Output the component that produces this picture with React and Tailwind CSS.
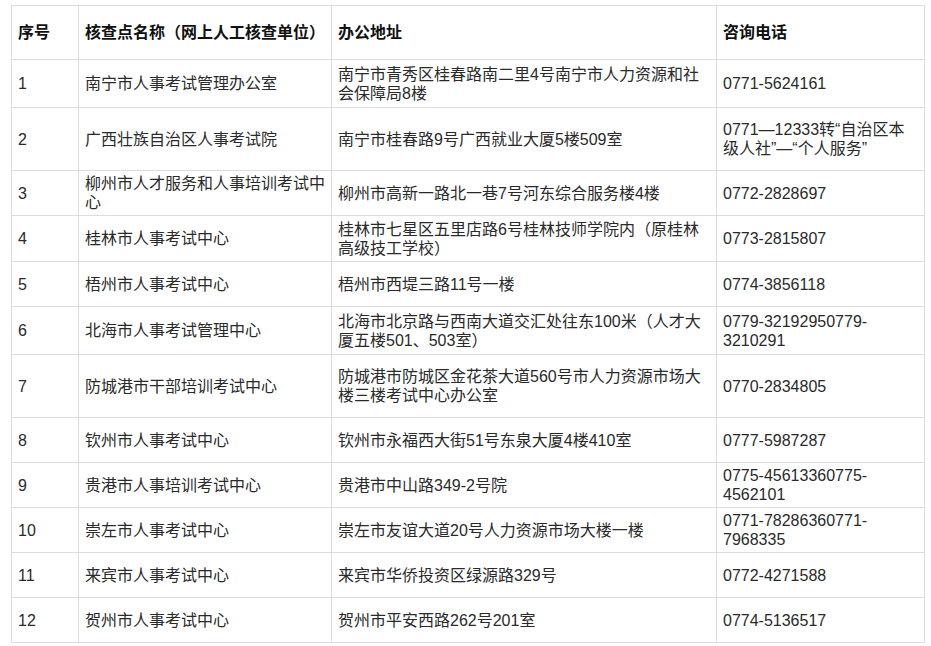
const rows = [
  { no: "1", name: "南宁市人事考试管理办公室", addr: "南宁市青秀区桂春路南二里4号南宁市人力资源和社会保障局8楼", tel: "0771-5624161", h: "h-[48px]" },
  { no: "2", name: "广西壮族自治区人事考试院", addr: "南宁市桂春路9号广西就业大厦5楼509室", tel: "0771—12333转“自治区本级人社”—“个人服务”", h: "h-[63px]" },
  { no: "3", name: "柳州市人才服务和人事培训考试中心", addr: "柳州市高新一路北一巷7号河东综合服务楼4楼", tel: "0772-2828697", h: "h-[45px]" },
  { no: "4", name: "桂林市人事考试中心", addr: "桂林市七星区五里店路6号桂林技师学院内（原桂林高级技工学校）", tel: "0773-2815807", h: "h-[46px]" },
  { no: "5", name: "梧州市人事考试中心", addr: "梧州市西堤三路11号一楼", tel: "0774-3856118", h: "h-[45px]" },
  { no: "6", name: "北海市人事考试管理中心", addr: "北海市北京路与西南大道交汇处往东100米（人才大厦五楼501、503室）", tel: "0779-32192950779-3210291", h: "h-[48px]" },
  { no: "7", name: "防城港市干部培训考试中心", addr: "防城港市防城区金花茶大道560号市人力资源市场大楼三楼考试中心办公室", tel: "0770-2834805", h: "h-[63px]" },
  { no: "8", name: "钦州市人事考试中心", addr: "钦州市永福西大街51号东泉大厦4楼410室", tel: "0777-5987287", h: "h-[45px]" },
  { no: "9", name: "贵港市人事培训考试中心", addr: "贵港市中山路349-2号院", tel: "0775-45613360775-4562101", h: "h-[45px]" },
  { no: "10", name: "崇左市人事考试中心", addr: "崇左市友谊大道20号人力资源市场大楼一楼", tel: "0771-78286360771-7968335", h: "h-[45px]" },
  { no: "11", name: "来宾市人事考试中心", addr: "来宾市华侨投资区绿源路329号", tel: "0772-4271588", h: "h-[45px]" },
  { no: "12", name: "贺州市人事考试中心", addr: "贺州市平安西路262号201室", tel: "0774-5136517", h: "h-[45px]" },
];

const cell = "border border-[#dddddd] px-[6px] py-0 align-middle text-left";

const App = () => {
  return (
    <div className="min-h-screen bg-white pl-[11px] pt-[5px] font-['Liberation_Sans','Noto_Sans_CJK_SC',sans-serif] text-[16px] leading-[19px] text-[#2a2a2a]">
      <table className="w-[913px] table-fixed border-collapse">
        <colgroup>
          <col className="w-[67px]" />
          <col className="w-[253px]" />
          <col className="w-[385px]" />
          <col className="w-[208px]" />
        </colgroup>
        <thead>
          <tr className="h-[54px]">
            <th className={`${cell} font-bold text-[#111111]`}>序号</th>
            <th className={`${cell} font-bold text-[#111111]`}>核查点名称（网上人工核查单位）</th>
            <th className={`${cell} font-bold text-[#111111]`}>办公地址</th>
            <th className={`${cell} font-bold text-[#111111]`}>咨询电话</th>
          </tr>
        </thead>
        <tbody>
          {rows.map((row) => (
            <tr key={row.no} className={row.h}>
              <td className={cell}>{row.no}</td>
              <td className={cell}>{row.name}</td>
              <td className={cell}>{row.addr}</td>
              <td className={cell}>{row.tel}</td>
            </tr>
          ))}
        </tbody>
      </table>
    </div>
  );
};

export default App;
